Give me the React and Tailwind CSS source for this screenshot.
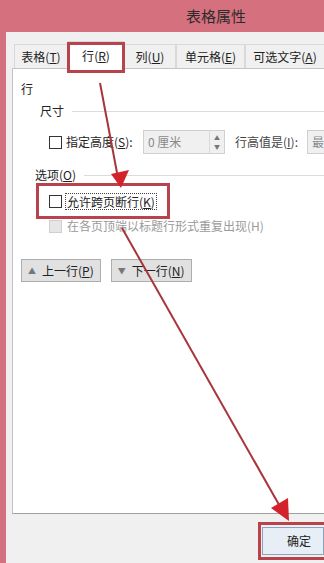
import React from 'react'

const Key = ({ k }) => (
  <>
    (<span className="underline">{k}</span>)
  </>
)

const Tab = ({ label, k, active, className = '' }) => (
  <div
    className={`flex items-center justify-center border border-[#d9d9d9] border-b-0 text-[12px] text-[#222] shrink-0 ${
      active ? 'bg-white h-[28px] -mb-px z-10' : 'bg-[#f0f0f0] h-[24px]'
    } ${className}`}
  >
    {label}
    <Key k={k} />
  </div>
)

const Checkbox = ({ disabled }) => (
  <div
    className={`w-[13px] h-[13px] shrink-0 border ${
      disabled ? 'border-[#cfcfcf] bg-[#e6e6e6]' : 'border-[#333] bg-white'
    }`}
  />
)

const Section = ({ title, k, className = '' }) => (
  <div className={`flex items-center gap-2 ${className}`}>
    <span className="text-[12px] text-[#222] whitespace-nowrap">
      {title}
      {k && <Key k={k} />}
    </span>
    <div className="flex-1 h-px bg-[#dcdcdc]" />
  </div>
)

const MoveButton = ({ up, label, k }) => (
  <button className="h-[23px] flex items-center gap-[6px] px-[6px] border border-[#adadad] bg-[#e1e1e1] text-[12px] text-[#222]">
    <span className="text-[8px] text-[#777]">{up ? '▲' : '▼'}</span>
    <span>
      {label}
      <Key k={k} />
    </span>
  </button>
)

export default function App() {
  return (
    <div
      className="relative w-[324px] h-[563px] overflow-hidden bg-[#d5717f] flex flex-col"
      style={{ fontFamily: '"Noto Sans CJK SC", "Noto Sans", sans-serif' }}
    >
      {/* title bar */}
      <div className="h-[32px] flex items-center pl-[186px] text-[15px] text-[#2b2b2b]">表格属性</div>

      <div className="flex-1 ml-[6px] bg-[#f0f0f0] flex flex-col pt-[11px]">
        {/* tabs */}
        <div className="flex items-end pl-[8px] h-[25px]">
          <Tab label="表格" k="T" className="w-[54px]" />
          <Tab label="行" k="R" active className="w-[56px]" />
          <Tab label="列" k="U" className="w-[52px]" />
          <Tab label="单元格" k="E" className="w-[69px]" />
          <Tab label="可选文字" k="A" className="w-[80px]" />
        </div>

        {/* tab panel */}
        <div className="ml-[6px] h-[446px] bg-white border border-r-0 border-[#c4c4c4] border-b-[#a0a0a0] pl-[8px] pt-[12px] text-[#222] overflow-hidden">
          <div className="text-[12px] leading-[16px]">行</div>

          <div className="pl-[19px] mt-[5px]">
            <Section title="尺寸" />
            <div className="flex items-center mt-[10px] pl-[9px] h-[24px]">
              <Checkbox />
              <span className="ml-[4px] w-[77px] shrink-0 text-[12px] whitespace-nowrap">
                指定高度<Key k="S" />:
              </span>
              <div className="w-[82px] h-[24px] shrink-0 border border-[#d0d0d0] bg-[#f0f0f0] flex items-center">
                <span className="flex-1 pl-[4px] text-[12px] text-[#8a8a8a]">0 厘米</span>
                <div className="w-[15px] h-full border-l border-[#d9d9d9] flex flex-col items-center justify-center text-[6px] leading-[9px] text-[#777]">
                  <span>▲</span>
                  <span>▼</span>
                </div>
              </div>
              <span className="ml-[10px] w-[72px] shrink-0 text-[12px] text-[#444] whitespace-nowrap">
                行高值是<Key k="I" />:
              </span>
              <div className="w-[40px] h-[24px] border border-[#d0d0d0] bg-[#f0f0f0] pl-[4px] flex items-center text-[12px] text-[#8a8a8a] shrink-0">
                最
              </div>
            </div>
          </div>

          <Section title="选项" k="O" className="mt-[12px] pl-[14px]" />

          <div className="pl-[28px] mt-[8px] flex items-center h-[18px]">
            <Checkbox />
            <span className="ml-[3px] px-[1px] border border-dotted border-[#444] text-[12px] leading-[15px]">
              允许跨页断行<Key k="K" />
            </span>
          </div>
          <div className="pl-[28px] mt-[7px] flex items-center h-[18px]">
            <Checkbox disabled />
            <span className="ml-[5px] text-[12px] text-[#9a9a9a] whitespace-nowrap">
              在各页顶端以标题行形式重复出现(H)
            </span>
          </div>

          <div className="flex gap-[10px] mt-[24px]">
            <MoveButton up label="上一行" k="P" />
            <MoveButton label="下一行" k="N" />
          </div>
        </div>

        {/* footer */}
        <div className="flex-1 flex items-start pl-[256px] pt-[13px]">
          <button className="w-[70px] h-[28px] border border-[#8aa4bd] bg-[#e7eef5] text-[12px] text-[#222] flex items-center pl-[24px]">
            确定
          </button>
        </div>
      </div>

      {/* red annotation boxes */}
      <div className="absolute left-[67px] top-[42px] w-[58px] h-[31px] border-[3px] border-[#b8434c] z-20" />
      <div className="absolute left-[36px] top-[183px] w-[134px] h-[36px] border-[3px] border-[#b8434c]" />
      <div className="absolute left-[258px] top-[522px] w-[70px] h-[38px] border-[3px] border-[#b8434c]" />

      {/* arrows */}
      <svg className="absolute inset-0 z-30" width="324" height="563" viewBox="0 0 324 563">
        <line x1="100" y1="83" x2="118" y2="178" stroke="#a8353c" strokeWidth="2" />
        <polygon points="111,174 129,170 121,188" fill="#d3222b" />
        <line x1="122" y1="228" x2="282" y2="510" stroke="#a8353c" strokeWidth="2" />
        <polygon points="271,508 288,498 289,521" fill="#d3222b" />
      </svg>
    </div>
  )
}
